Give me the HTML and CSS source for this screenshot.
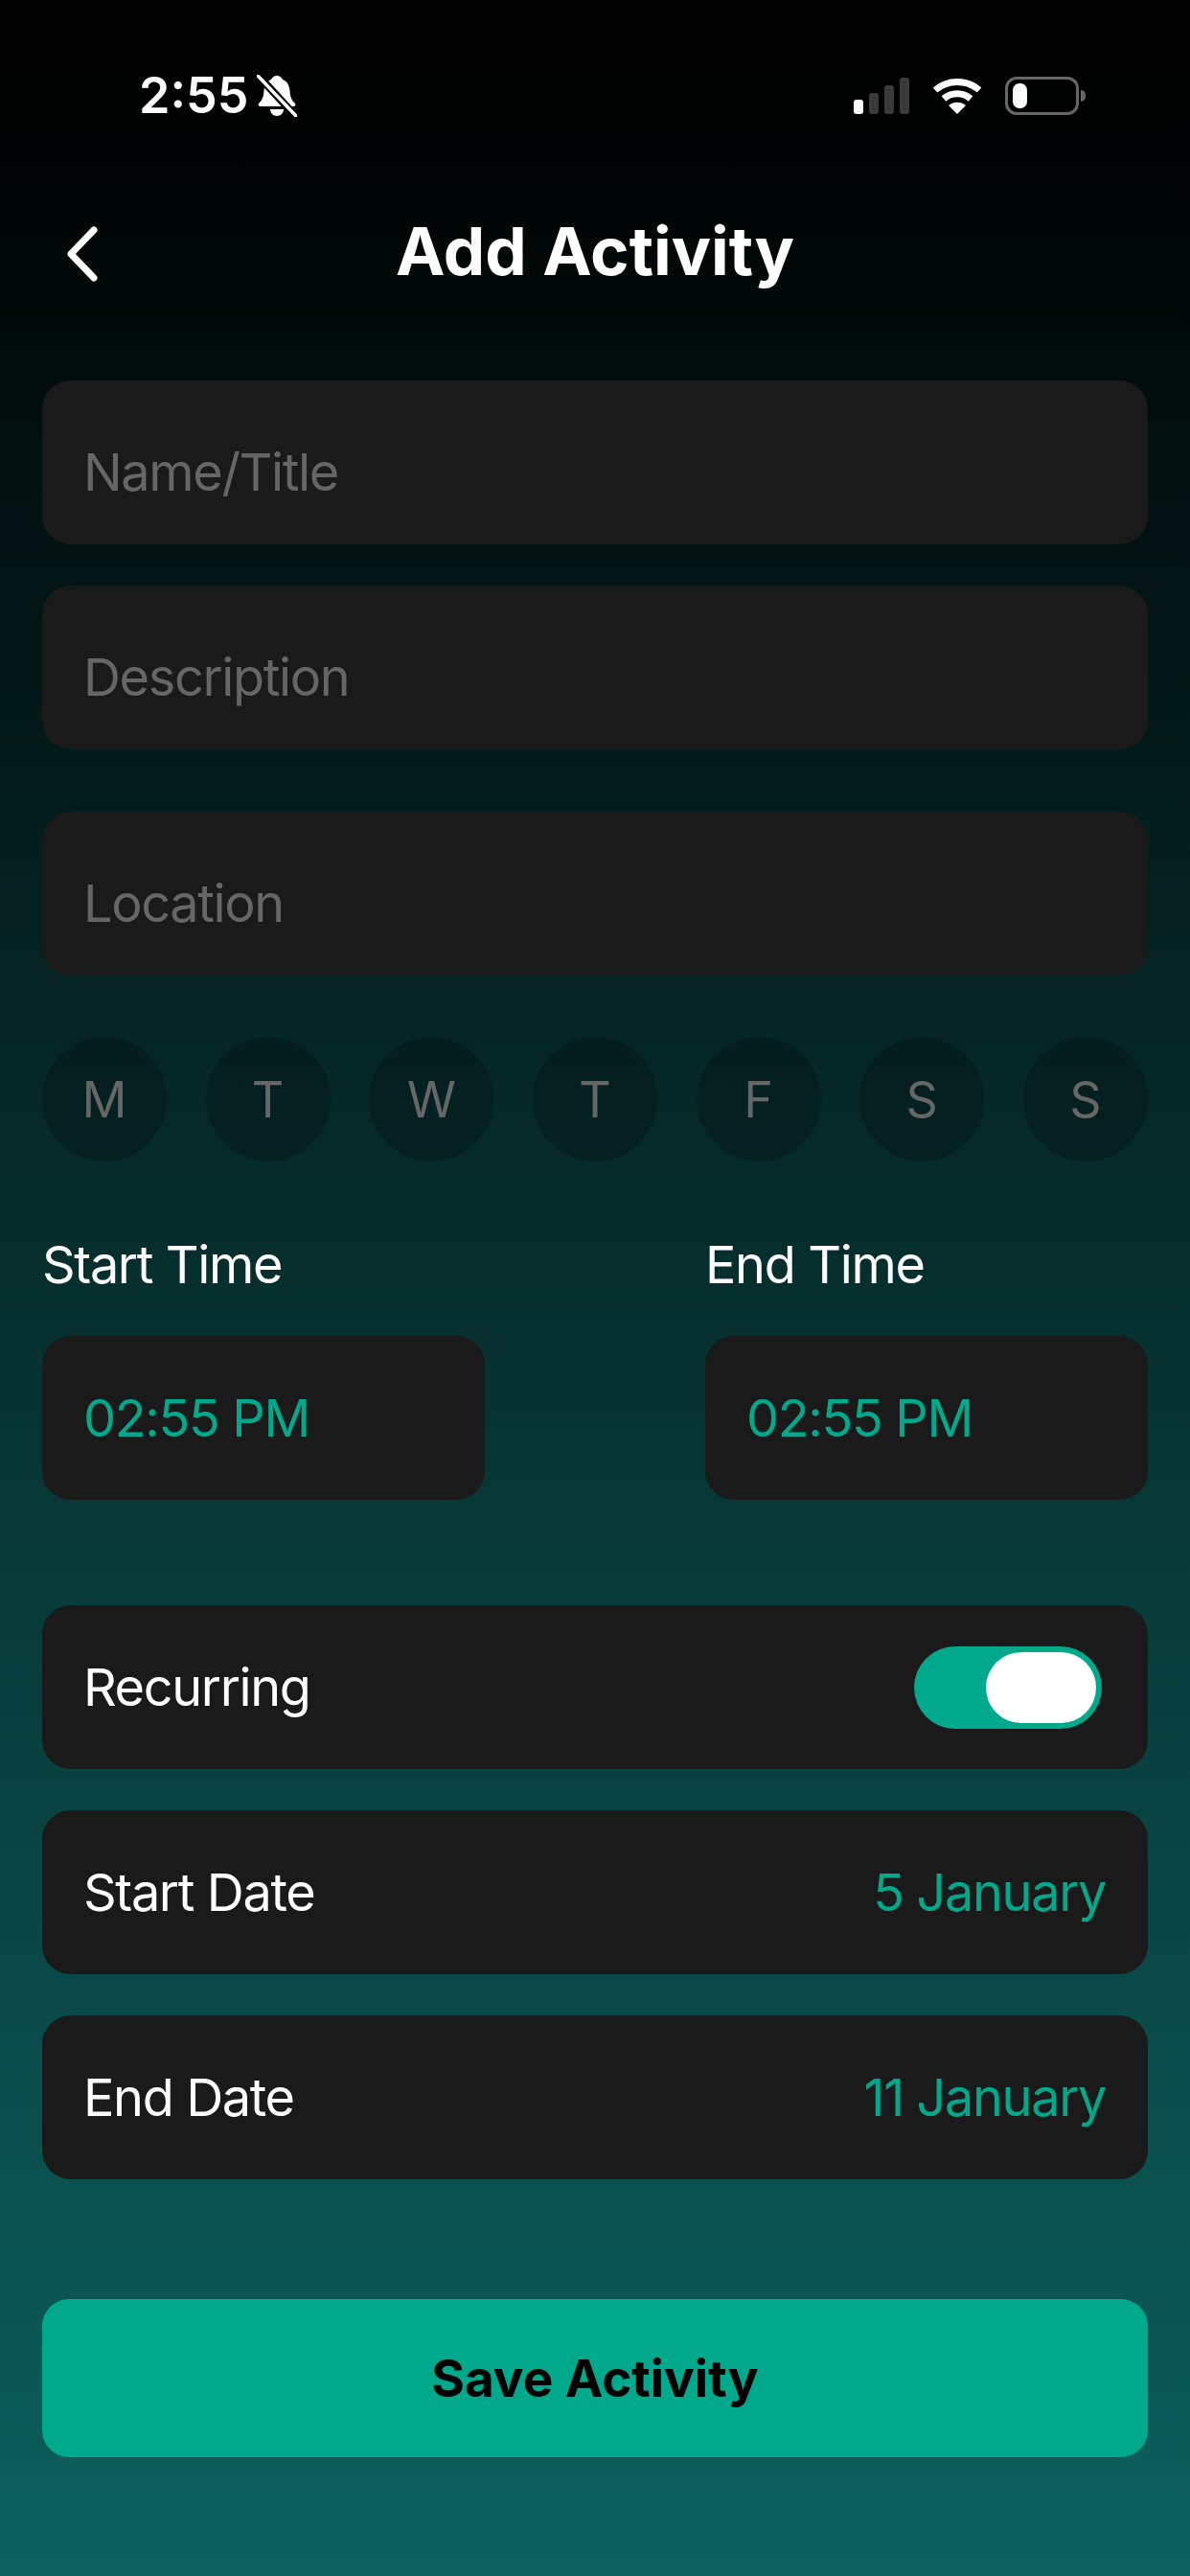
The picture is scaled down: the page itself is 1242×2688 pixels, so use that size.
FILE: index.html
```html
<!DOCTYPE html>
<html lang="en">
<head>
    <meta charset="UTF-8">
    <title>Add Activity</title>
    <link rel="stylesheet" href="styles.css">
</head>
<body>
    <div class="screen">
        <div class="status">
            <div class="status__left">
                <span class="status__time">2:55</span>
                <svg class="status__bell" width="42" height="44" viewBox="0 0 42 44">
                    <path d="M21 1c3 0 5 2 6 4 5 2 7 6 7.500 12 .5 6 1.500 9 5.500 13 1 2 0 3-2 3H4c-2 0-3-1-2-3 4-4 5-7 5.500-13C8 11 10 7 15 5c1-2 3-4 6-4z" fill="#fff"/>
                    <path d="M14 36h14c0 4-3 7-7 7s-7-3-7-7z" fill="#fff"/>
                    <path d="M0 -1L42 45" stroke="#000" stroke-width="8"/>
                    <path d="M1 1L41 43" stroke="#fff" stroke-width="3.600" stroke-linecap="round"/>
                </svg>
            </div>
            <div class="status__right">
                <div class="signal">
                    <span class="signal__bar signal__bar--on signal__bar--1"></span>
                    <span class="signal__bar signal__bar--2"></span>
                    <span class="signal__bar signal__bar--3"></span>
                    <span class="signal__bar signal__bar--4"></span>
                </div>
                <svg class="wifi" width="52" height="38" viewBox="0 0 52 38">
                    <path d="M26 38l-9-9c5-4.500 13-4.500 18 0z" fill="#fff"/>
                    <path d="M3 13C16 1.500 36 1.500 49 13" fill="none" stroke="#fff" stroke-width="7"/>
                    <path d="M12 22c8-7 20-7 28 0" fill="none" stroke="#fff" stroke-width="7"/>
                </svg>
                <div class="battery">
                    <div class="battery__body"><span class="battery__fill"></span></div>
                    <span class="battery__nub"></span>
                </div>
            </div>
        </div>

        <div class="header">
            <svg class="header__back" width="40" height="60" viewBox="0 0 40 60">
                <path d="M32 5L8 30l24 25" fill="none" stroke="#fff" stroke-width="7" stroke-linecap="round" stroke-linejoin="round"/>
            </svg>
            <h1 class="header__title">Add Activity</h1>
        </div>

        <div class="form">
            <div class="field field--placeholder">Name/Title</div>
            <div class="field field--placeholder">Description</div>
            <div class="field field--placeholder field--location">Location</div>

            <div class="days">
                <div class="days__item">M</div>
                <div class="days__item">T</div>
                <div class="days__item">W</div>
                <div class="days__item">T</div>
                <div class="days__item">F</div>
                <div class="days__item">S</div>
                <div class="days__item">S</div>
            </div>

            <div class="times">
                <div class="times__col">
                    <div class="times__label">Start Time</div>
                    <div class="field field--accent">02:55 PM</div>
                </div>
                <div class="times__col">
                    <div class="times__label">End Time</div>
                    <div class="field field--accent">02:55 PM</div>
                </div>
            </div>

            <div class="field field--row field--recurring">
                <span>Recurring</span>
                <div class="toggle"><span class="toggle__knob"></span></div>
            </div>
            <div class="field field--row">
                <span>Start Date</span>
                <span class="field__value">5 January</span>
            </div>
            <div class="field field--row">
                <span>End Date</span>
                <span class="field__value">11 January</span>
            </div>

            <button class="save">Save Activity</button>
        </div>
    </div>
</body>
</html>
```

FILE: styles.css
```css
* {
    box-sizing: border-box;
}
body {
    margin: 0;
    background: #000;
    font-family: Inter, "Liberation Sans", sans-serif;
}
.screen {
    width: 1242px;
    height: 2688px;
    overflow: hidden;
    background: linear-gradient(180deg, #000 2%, #0c605e 100%);
    color: #fff;
}

.status {
    height: 200px;
    display: flex;
    justify-content: space-between;
    align-items: center;
}
.status__left {
    display: flex;
    align-items: center;
    gap: 9px;
    margin-left: 145px;
}
.status__time {
    font-size: 52px;
    font-weight: 600;
    line-height: 44px;
}
.status__right {
    display: flex;
    align-items: center;
    margin-right: 109px;
}
.signal {
    display: flex;
    align-items: flex-end;
    gap: 6px;
    height: 38px;
    margin-right: 24px;
}
.signal__bar {
    width: 10px;
    border-radius: 3px;
    background: #3a3a3a;
}
.signal__bar--on { background: #fff; }
.signal__bar--1 { height: 15px; }
.signal__bar--2 { height: 22px; }
.signal__bar--3 { height: 30px; }
.signal__bar--4 { height: 38px; }
.wifi {
    margin-right: 24px;
}
.battery {
    display: flex;
    align-items: center;
    gap: 2px;
}
.battery__body {
    width: 77px;
    height: 40px;
    padding: 4px 5px;
    border: 3px solid #666;
    border-radius: 12px;
}
.battery__fill {
    display: block;
    width: 15px;
    height: 100%;
    border-radius: 7px;
    background: #fff;
}
.battery__nub {
    width: 5px;
    height: 12px;
    border-radius: 0 6px 6px 0;
    background: #666;
}

.header {
    height: 130px;
    position: relative;
    display: flex;
    justify-content: center;
    align-items: center;
}
.header__back {
    position: absolute;
    left: 66px;
    top: 35px;
}
.header__title {
    margin: 0 0 6px;
    font-size: 69px;
    font-weight: 700;
}

.form {
    padding: 67px 44px 0;
    display: flex;
    flex-direction: column;
}
.field {
    height: 171px;
    padding: 0 44px 0 43px;
    margin-bottom: 43px;
    display: flex;
    align-items: center;
    border-radius: 30px;
    background: #1a1a1a;
    font-size: 54px;
    letter-spacing: -0.025em;
}
.field--placeholder {
    color: #666;
    padding-top: 20px;
}
.field--location {
    margin-top: 22px;
    margin-bottom: 64px;
}
.field--accent {
    color: #00a88c;
    margin-bottom: 0;
}
.field--row {
    justify-content: space-between;
}
.field--recurring {
    margin-top: 110px;
}
.field__value {
    color: #00a88c;
}

.days {
    display: flex;
    justify-content: space-between;
    margin-bottom: 64px;
}
.days__item {
    width: 130px;
    height: 130px;
    border-radius: 50%;
    background: rgba(0, 0, 0, 0.2);
    color: #666;
    font-size: 52px;
    display: flex;
    justify-content: center;
    align-items: center;
}

.times {
    display: flex;
    justify-content: space-between;
}
.times__col {
    width: 462px;
}
.times__label {
    font-size: 54px;
    letter-spacing: -0.025em;
    line-height: 64px;
    padding-top: 12px;
    margin-bottom: 42px;
}

.toggle {
    width: 196px;
    height: 86px;
    margin-right: 4px;
    padding: 6px;
    display: flex;
    justify-content: flex-end;
    border-radius: 43px;
    background: #00a88c;
}
.toggle__knob {
    width: 115px;
    height: 74px;
    border-radius: 37px;
    background: #fff;
}

.save {
    height: 165px;
    margin-top: 82px;
    border: none;
    border-radius: 28px;
    background: #00a88c;
    color: #000;
    font-family: Inter, "Liberation Sans", sans-serif;
    font-size: 53px;
    font-weight: 700;
}
```
